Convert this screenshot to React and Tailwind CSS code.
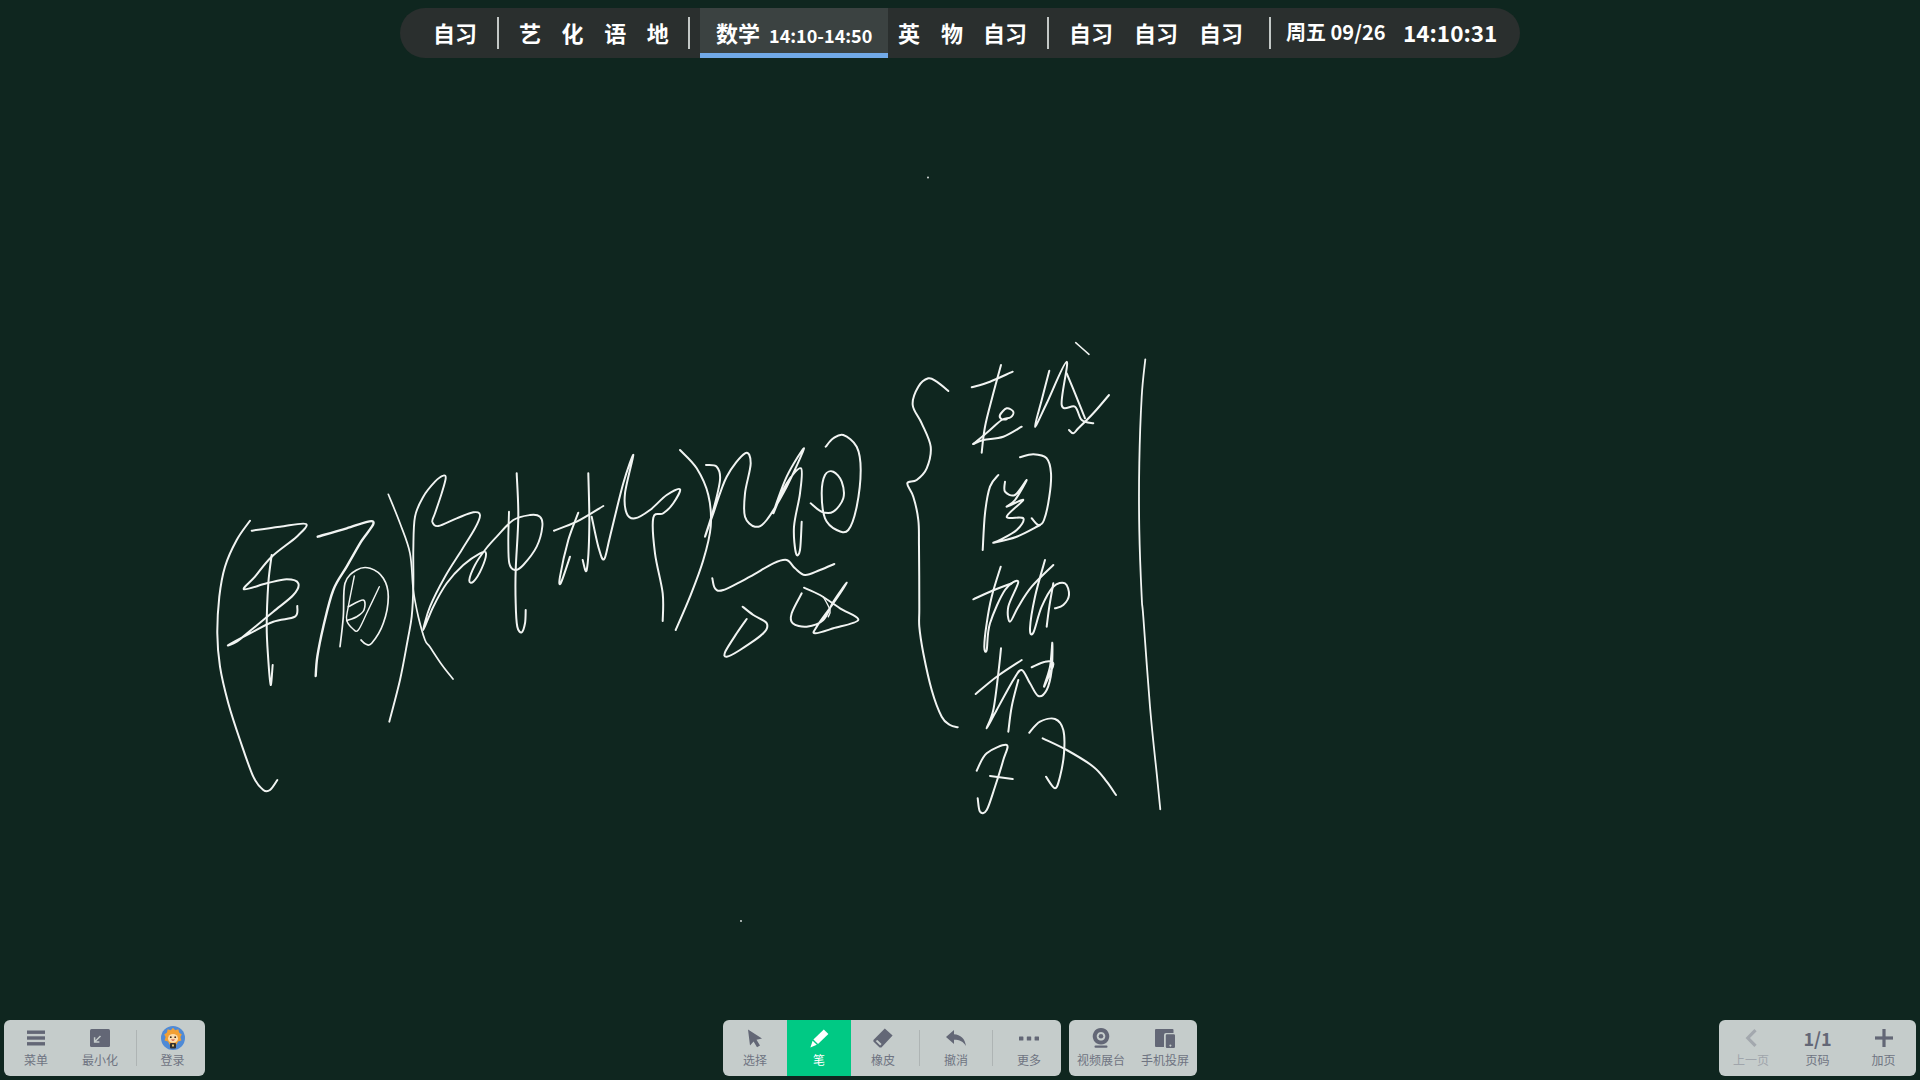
const Z7 = [200, 500];
const Z8 = [500, 420];
const Z9 = [890, 330];
const Z10 = [890, 540];
const Z11 = [380, 460];

const STROKES = [
  [Z7, [[150,62],[110,120],[75,200],[58,290],[52,400],[60,500],[85,610],[120,720],[160,830],[190,870],[210,870],[232,840]]],
  [Z7, [[155,92],[240,80],[318,72],[290,110],[215,170],[165,230],[132,268],[200,250],[260,238],[295,250],[280,285],[220,335],[160,385],[110,425],[85,435],[150,400],[220,365],[285,350],[292,318]]],
  [Z7, [[215,165],[205,250],[200,380],[205,480],[212,555],[218,495]]],
  [Z7, [[353,110],[440,85],[520,65],[480,130],[440,200],[400,270],[370,380],[352,470],[347,528]], 2.4],
  [Z7, [[420,440],[430,350],[435,250],[470,210],[510,205],[550,235],[565,290],[550,370],[515,430],[497,432],[483,420]], 1.7],
  [Z7, [[463,228],[445,320],[440,360],[460,388],[475,390],[500,340],[538,260]], 1.4],
  [Z7, [[445,320],[490,300],[492,330],[470,350],[440,362]], 1.6],
  [Z11, [[25,103],[60,190],[90,280],[100,390],[115,470],[135,540],[150,561],[186,615],[219,657]], 1.7],
  [Z11, [[28,785],[60,660],[83,540],[95,470],[100,380],[100,270],[105,170],[130,110],[165,65],[190,47],[197,55],[185,100],[165,160],[157,185],[175,198],[230,175],[280,157],[300,165],[285,205],[245,270],[195,350],[150,440],[130,510],[160,440],[200,370],[250,315],[300,280],[318,280],[305,325],[280,365],[268,360],[285,315],[315,270],[350,230],[400,180],[450,165],[480,170],[487,200],[470,260],[430,315],[405,330],[388,310],[385,240],[387,155]], 1.9],
  [Z11, [[410,40],[415,170],[407,330],[407,430],[412,500],[425,517],[435,490],[437,450]]],
  [Z8, [[162,332],[230,305],[310,258]]],
  [Z8, [[235,278],[205,360],[180,470],[183,488],[210,410]]],
  [Z8, [[265,160],[268,320],[260,450],[248,420]]],
  [Z8, [[275,290],[295,380],[312,418],[330,350],[370,190],[400,105],[375,220],[380,280],[405,295],[450,270],[500,225],[540,208],[520,250],[490,280],[460,293],[465,400],[488,520],[488,603]]],
  [Z8, [[540,90],[590,145],[625,225],[632,320],[610,420],[570,530],[527,630]]],
  [Z8, [[618,135],[650,140],[660,180],[640,270],[615,350],[640,280],[680,170],[735,100],[752,130],[735,220],[735,290],[765,320],[800,300],[860,200],[912,85],[860,170],[820,280],[860,190],[903,145],[900,220],[882,320],[888,400],[900,390],[905,305]]],
  [Z8, [[932,250],[965,275],[1000,275],[1030,235],[1025,185],[1000,155],[975,165],[965,220],[975,295],[1010,330],[1045,330],[1070,260],[1082,150],[1070,80],[1030,45],[1000,55],[977,80]]],
  [Z8, [[637,475],[645,505],[670,510],[750,470],[820,430],[860,420],[885,445],[915,465],[960,450],[1003,432]]],
  [Z8, [[728,560],[760,585],[800,610],[790,640],[720,690],[680,710],[676,695],[710,640],[740,597]]],
  [Z8, [[905,520],[875,580],[878,610],[920,620],[970,600],[1000,545],[1040,488],[1000,550],[950,620],[945,640],[1000,625],[1075,600],[1020,565],[960,525],[912,503]]],
  [Z8, [[970,530],[990,570],[985,590]], 1.4],
  [Z9, [[175,183],[140,155],[115,145],[85,170],[68,225],[95,280],[122,350],[110,415],[80,450],[52,460],[70,500],[85,570],[87,650],[88,830],[88,890],[100,970],[125,1080],[155,1160],[180,1185],[203,1192]]],
  [Z9, [[766,88],[755,200],[748,400],[748,600],[755,800],[760,860],[780,1130],[800,1330],[811,1438]], 1.8],
  [Z9, [[245,172],[300,155],[368,125]]],
  [Z9, [[333,105],[310,190],[285,290],[275,368]]],
  [Z9, [[250,342],[300,300],[335,270],[362,262],[370,245],[350,235],[330,255],[335,268],[350,268]]],
  [Z9, [[250,342],[280,330],[340,320],[395,290]]],
  [Z9, [[478,122],[455,210],[435,290],[470,220],[530,95],[515,225],[555,230],[575,270],[610,280]]],
  [Z9, [[657,195],[610,250],[565,295],[550,310],[537,300]]],
  [Z9, [[530,130],[555,190],[585,265]]],
  [Z9, [[557,38],[597,73]], 1.6],
  [Z9, [[325,435],[300,470],[285,550],[278,660]]],
  [Z9, [[390,382],[430,373],[470,385],[483,430],[478,500],[462,570],[445,585],[425,565]]],
  [Z9, [[345,455],[345,485],[375,495],[410,450],[375,510],[350,530],[400,510],[350,560],[400,565],[380,600],[330,630],[312,638],[380,620],[450,585]]],
  [Z10, [[250,178],[300,155],[365,130]]],
  [Z10, [[332,80],[305,170],[290,250],[283,320],[290,330],[300,250],[345,150],[385,125],[355,200],[360,245],[385,200],[425,140],[490,75]]],
  [Z10, [[465,60],[435,170],[420,265],[430,278],[455,200],[490,140],[525,130],[537,165],[520,195],[495,205]]],
  [Z10, [[490,130],[478,200],[470,260]]],
  [Z10, [[333,325],[325,400],[310,510],[290,565],[320,510],[370,420],[395,390],[420,430],[445,468],[470,450],[485,390],[487,308],[480,380],[462,440],[480,400],[490,370],[465,365],[425,382]]],
  [Z10, [[257,462],[320,410],[395,360]]],
  [Z10, [[385,420],[365,500],[355,575]]],
  [Z10, [[260,692],[290,640],[350,615],[340,660],[315,740],[290,810],[270,815],[263,775]]],
  [Z10, [[300,708],[368,717]]],
  [Z10, [[418,578],[450,545],[495,537],[520,570],[522,640],[510,710],[495,745],[468,710]]],
  [Z10, [[458,595],[530,630],[610,680],[650,725],[678,765]]],
];

function smoothPath([ox, oy], pts) {
  const p = pts.map(([x, y]) => [ox + x / 3, oy + y / 3]);
  let d = `M${p[0][0].toFixed(1)} ${p[0][1].toFixed(1)}`;
  for (let i = 0; i < p.length - 1; i++) {
    const a = p[i - 1] || p[i];
    const b = p[i];
    const c = p[i + 1];
    const e = p[i + 2] || c;
    const c1x = b[0] + (c[0] - a[0]) / 6;
    const c1y = b[1] + (c[1] - a[1]) / 6;
    const c2x = c[0] - (e[0] - b[0]) / 6;
    const c2y = c[1] - (e[1] - b[1]) / 6;
    d += `C${c1x.toFixed(1)} ${c1y.toFixed(1)} ${c2x.toFixed(1)} ${c2y.toFixed(1)} ${c[0].toFixed(1)} ${c[1].toFixed(1)}`;
  }
  return d;
}

function Handwriting() {
  return (
    <svg className="absolute inset-0 pointer-events-none" width="1920" height="1080" viewBox="0 0 1920 1080" fill="none">
      {STROKES.map(([o, pts, w], i) => (
        <path key={i} d={smoothPath(o, pts)} stroke="#f1f4f2" strokeWidth={w || 2} strokeLinecap="round" strokeLinejoin="round" />
      ))}
      <circle cx="928" cy="177.5" r="0.9" fill="#e8ecea" />
      <circle cx="741" cy="921" r="0.9" fill="#e8ecea" />
    </svg>
  );
}

const IC = "#636776";

const Icons = {
  menu: (
    <svg width="18" height="16" viewBox="0 0 18 16" fill={IC}>
      <rect y="0.5" width="18" height="3.4" /><rect y="6.3" width="18" height="3.4" /><rect y="12.1" width="18" height="3.4" />
    </svg>
  ),
  minimize: (
    <svg width="20" height="18" viewBox="0 0 20 18">
      <rect width="20" height="18" rx="1.5" fill={IC} />
      <path d="M10.5 7 L5 12.5 M4.6 8.2 V13 H9.4" stroke="#c5cccb" strokeWidth="1.5" fill="none" />
    </svg>
  ),
  avatar: (
    <svg width="24" height="24" viewBox="0 0 24 24">
      <circle cx="12" cy="12" r="12" fill="#4f8ad6" />
      <path d="M12 1.8 L14.2 4.2 L17.4 3.2 L18 6.6 L20.8 8.4 L19.4 11 L20.4 14.4 L17 15.4 L15.6 18.4 H8.4 L7 15.4 L3.6 14.4 L4.6 11 L3.2 8.4 L6 6.6 L6.6 3.2 L9.8 4.2 Z" fill="#f2a034" />
      <ellipse cx="12" cy="12.4" rx="5" ry="4.4" fill="#fbdcae" />
      <circle cx="9.8" cy="11.2" r="0.9" fill="#3a2a20" /><circle cx="14.2" cy="11.2" r="0.9" fill="#3a2a20" />
      <path d="M10 13.5 Q12 16 14 13.5 Z" fill="#c8413c" />
      <rect x="9" y="17" width="6" height="5.5" rx="1" fill="#33302e" />
      <rect x="11" y="18.5" width="2" height="2" fill="#e9c46a" />
    </svg>
  ),
  select: (
    <svg width="16" height="19" viewBox="0 0 16 19" fill={IC}>
      <path d="M1 0.5 L15 9.5 L9.5 10.8 L13 16.5 L10 18.3 L6.6 12.6 L3 16.5 Z" />
    </svg>
  ),
  pen: (
    <svg width="19" height="19" viewBox="0 0 19 19" fill="#ffffff">
      <path d="M13.8 0.6 L18.4 5 L8 15 L3.4 10.6 Z" />
      <path d="M2.6 11.8 L6.8 15.8 L0.4 18.4 Z" />
    </svg>
  ),
  eraser: (
    <svg width="20" height="20" viewBox="0 0 20 20" fill={IC}>
      <path d="M11.8 0.4 L19.6 7.6 L8.4 19.4 L6.6 19.4 L0.4 13.4 L0.4 12 Z M4.4 12 L2.6 13 L7.2 17.4 L8.6 16 Z" fillRule="evenodd" />
    </svg>
  ),
  undo: (
    <svg width="20" height="16" viewBox="0 0 20 16" fill={IC}>
      <path d="M8 0 V4.2 C14.5 4.6 19 8.4 20 16 C17.4 11.6 13.6 9.8 8 9.8 V14 L0 7 Z" />
    </svg>
  ),
  more: (
    <svg width="20" height="5" viewBox="0 0 20 5" fill={IC}>
      <rect y="0.5" width="4.4" height="4" rx="0.5" /><rect x="7.8" y="0.5" width="4.4" height="4" rx="0.5" /><rect x="15.6" y="0.5" width="4.4" height="4" rx="0.5" />
    </svg>
  ),
  webcam: (
    <svg width="18" height="20" viewBox="0 0 18 20" fill={IC}>
      <path fillRule="evenodd" d="M9 0 A8.3 8.3 0 1 1 8.99 0 Z M9 4 A4.3 4.3 0 1 0 9.01 4 Z" />
      <circle cx="9" cy="8.3" r="2.3" />
      <rect x="2.5" y="17.6" width="13" height="2.2" rx="1" />
    </svg>
  ),
  phone: (
    <svg width="20" height="19" viewBox="0 0 20 19" fill={IC}>
      <path d="M1 0 H17.5 A1 1 0 0 1 18.5 1 V4 H11 A2 2 0 0 0 9 6 V18 H1 A1 1 0 0 1 0 17 V1 A1 1 0 0 1 1 0 Z" />
      <path fillRule="evenodd" d="M12 5.2 H18.8 A1.2 1.2 0 0 1 20 6.4 V17.8 A1.2 1.2 0 0 1 18.8 19 H12 A1.2 1.2 0 0 1 10.8 17.8 V6.4 A1.2 1.2 0 0 1 12 5.2 Z M15.4 15.4 a1 1 0 1 0 0.01 0 Z" />
    </svg>
  ),
  prev: (
    <svg width="12" height="18" viewBox="0 0 12 18" fill="none" stroke="#a3a8ae" strokeWidth="3.2">
      <path d="M10.5 1.2 L2.8 9 L10.5 16.8" />
    </svg>
  ),
  plus: (
    <svg width="18" height="18" viewBox="0 0 18 18" fill={IC}>
      <rect x="7.4" width="3.2" height="18" /><rect y="7.4" width="18" height="3.2" />
    </svg>
  ),
};

const FONT = "font-['Noto_Sans_CJK_SC','Noto_Sans',sans-serif]";

function Tool({ icon, label, width, active, muted, shift }) {
  return (
    <div
      className={`flex flex-col items-center shrink-0 ${width} ${shift || ""} ${active ? "bg-[#00c984]" : ""}`}
    >
      <div className="h-[32px] flex items-center justify-center pt-[4px]">{icon}</div>
      <span
        className={`text-[12px] leading-[16px] whitespace-nowrap ${active ? "text-white" : muted ? "text-[#a0a5ab]" : "text-[#6f7482]"}`}
      >
        {label}
      </span>
    </div>
  );
}

function Divider() {
  return <div className="w-px h-[36px] self-center bg-[#aeb4b4] shrink-0" />;
}

function Panel({ children }) {
  return <div className="flex h-[56px] rounded-[6px] bg-[#c5cccb] overflow-hidden">{children}</div>;
}

function Sep() {
  return <div className="w-[2px] h-[32px] bg-[#c3c8c6] shrink-0" />;
}

function Cn({ children, className }) {
  return <span className={`text-[22px] leading-[48px] pb-[2px] font-bold text-white ${className || ""}`}>{children}</span>;
}

function TopBar() {
  return (
    <div className="flex justify-center pt-[8px]">
      <div className="flex items-center w-[1120px] h-[50px] rounded-[25px] bg-[#2a2f2e] overflow-hidden text-white">
        <Cn className="w-[97px] pl-[33px] shrink-0">自习</Cn>
        <Sep />
        <div className="flex w-[189px] pl-[20px] gap-[20.6px] shrink-0">
          <Cn>艺</Cn><Cn>化</Cn><Cn>语</Cn><Cn>地</Cn>
        </div>
        <Sep />
        <div className="relative flex items-center h-[50px] w-[188px] ml-[10px] pl-[16px] bg-[#3b4241] shrink-0">
          <Cn>数学</Cn>
          <span className="text-[18px] font-bold ml-[9px] mt-[3px] leading-[24px] whitespace-nowrap">14:10-14:50</span>
          <div className="absolute left-0 right-0 bottom-0 h-[5px] bg-[#72aae8]" />
        </div>
        <div className="flex ml-[10px] w-[149px] shrink-0">
          <Cn className="mr-[21px]">英</Cn><Cn className="mr-[20px]">物</Cn><Cn>自习</Cn>
        </div>
        <Sep />
        <div className="flex ml-[20px] gap-[21px] w-[200px] shrink-0">
          <Cn>自习</Cn><Cn>自习</Cn><Cn>自习</Cn>
        </div>
        <Sep />
        <span className="ml-[15px] text-[20px] font-bold whitespace-nowrap leading-[48px] pb-[2px] w-[117px] shrink-0">周五 09/26</span>
        <span className="text-[22.5px] font-bold whitespace-nowrap leading-[48px] pb-[2px]">14:10:31</span>
      </div>
    </div>
  );
}

function BottomBar() {
  return (
    <div className="grid grid-cols-[1fr_auto_1fr] px-[4px] pb-[4px]">
      <div className="flex justify-start">
        <Panel>
          <Tool icon={Icons.menu} label="菜单" width="w-[64px]" />
          <Tool icon={Icons.minimize} label="最小化" width="w-[64px]" />
          <div className="w-[4px]" />
          <Divider />
          <Tool icon={Icons.avatar} label="登录" width="w-[68px]" shift="pl-[3px]" />
        </Panel>
      </div>
      <div className="flex gap-[8px]">
        <Panel>
          <Tool icon={Icons.select} label="选择" width="w-[64px]" />
          <Tool icon={Icons.pen} label="笔" width="w-[64px]" active />
          <Tool icon={Icons.eraser} label="橡皮" width="w-[64px]" />
          <div className="w-[4px]" />
          <Divider />
          <Tool icon={Icons.undo} label="撤消" width="w-[72px]" />
          <Divider />
          <Tool icon={Icons.more} label="更多" width="w-[68px]" shift="pl-[4px]" />
        </Panel>
        <Panel>
          <Tool icon={Icons.webcam} label="视频展台" width="w-[64px]" />
          <Tool icon={Icons.phone} label="手机投屏" width="w-[64px]" />
        </Panel>
      </div>
      <div className="flex justify-end">
        <Panel>
          <Tool icon={Icons.prev} label="上一页" width="w-[64px]" muted />
          <Tool
            icon={<span className="text-[18px] font-bold leading-[20px] text-[#636776]">1/1</span>}
            label="页码"
            width="w-[68px]"
            shift="pl-[1px]"
          />
          <Tool icon={Icons.plus} label="加页" width="w-[65px]" />
        </Panel>
      </div>
    </div>
  );
}

export default function App() {
  return (
    <div className={`relative w-[1920px] h-[1080px] overflow-hidden flex flex-col justify-between bg-[#0f261f] ${FONT}`}>
      <TopBar />
      <Handwriting />
      <BottomBar />
    </div>
  );
}
